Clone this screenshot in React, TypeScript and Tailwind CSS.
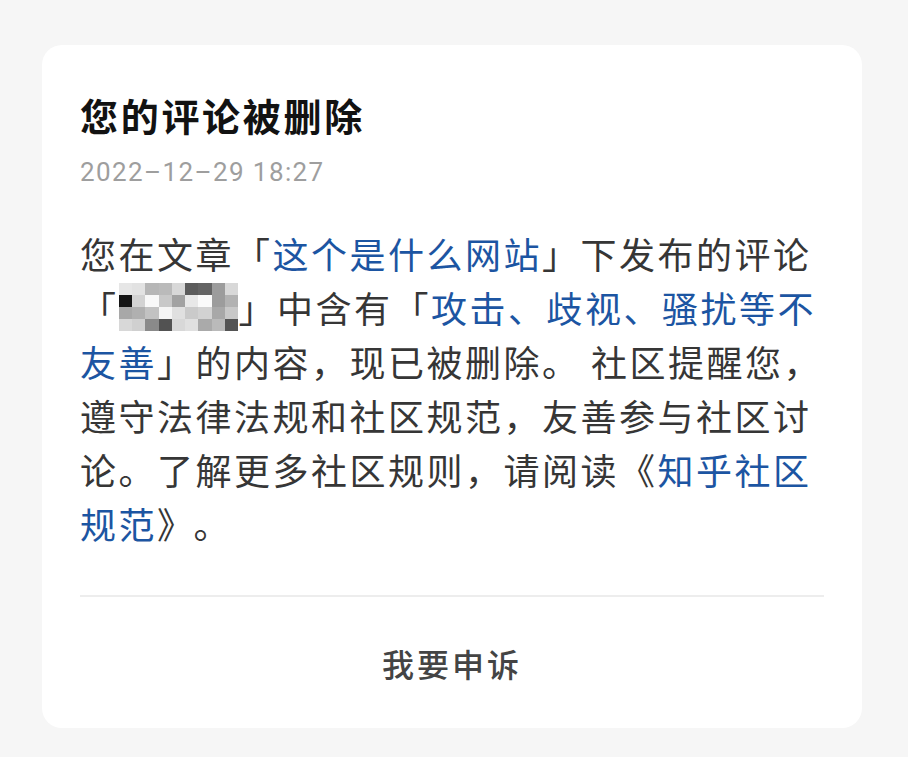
import React from "react";

const mosaic: string[][] = [
  ["#e6e6e6", "#e2e2e2", "#b6b6b6", "#bababa", "#d8d8d8", "#5c5c5c", "#646464", "#9c9c9c", "#d8d8d8"],
  ["#141414", "#d2d2d2", "#f8f8f8", "#c8c8c8", "#a2a2a2", "#e8e8e8", "#fafafa", "#9c9c9c", "#b2b2b2"],
  ["#a8a8a8", "#b0b0b0", "#c2c2c2", "#f5f5f5", "#e0e0e0", "#cacaca", "#d2d2d2", "#a8a8a8", "#c8c8c8"],
  ["#d8d8d8", "#d0d0d0", "#8a8a8a", "#525252", "#d8d8d8", "#e0e0e0", "#aaaaaa", "#bababa", "#545454"],
];

function Mosaic() {
  return (
    <span className="inline-flex flex-col align-top mt-[3px] w-[120px] h-[48px]">
      {mosaic.map((row, r) => (
        <span key={r} className="flex h-[12px]">
          {row.map((c, i) => (
            <span key={i} className="block flex-1 h-[12px]" style={{ backgroundColor: c }} />
          ))}
        </span>
      ))}
    </span>
  );
}

const L = ({ children }: { children: React.ReactNode }) => (
  <span className="text-[#1c55a2]">{children}</span>
);

export default function App() {
  return (
    <div
      className="min-h-[757px] bg-[#f6f6f6] pt-[45px] pb-[30px]"
      style={{ fontFamily: '"Noto Sans CJK SC", "Noto Sans", sans-serif' }}
    >
      <div className="ml-[42px] mr-[46px] bg-white rounded-[20px] overflow-hidden">
        <div className="px-[38px] pt-[46px]">
          <h1 className="text-[38px] leading-[48px] font-bold tracking-[2.7px] text-[#121212]">
            您的评论被删除
          </h1>
          <div
            className="mt-[17px] text-[26px] leading-[32px] tracking-[1.4px] text-[#9e9e9e]"
            style={{ fontFamily: 'Roboto, "Noto Sans CJK SC", sans-serif' }}
          >
            2022–12–29 18:27
          </div>
          <div className="mt-[38px] text-[36px] leading-[54px] tracking-[2.5px] text-[#363636] whitespace-nowrap">
            <div>
              您在文章「<L>这个是什么网站</L>」下发布的评论
            </div>
            <div>
              「<Mosaic />」中含有「<L>攻击、歧视、骚扰等不</L>
            </div>
            <div>
              <L>友善</L>」的内容，现已被删除。 社区提醒您，
            </div>
            <div>遵守法律法规和社区规范，友善参与社区讨</div>
            <div>
              论。了解更多社区规则，请阅读《<L>知乎社区</L>
            </div>
            <div>
              <L>规范</L>》<span className="ml-[16px]">。</span>
            </div>
          </div>
          <div className="mt-[45px] h-[2px] bg-[#ededed]" />
        </div>
        <button className="w-full h-[131px] flex items-center justify-center text-[32px] tracking-[3px] font-medium text-[#444444]">
          我要申诉
        </button>
      </div>
    </div>
  );
}
